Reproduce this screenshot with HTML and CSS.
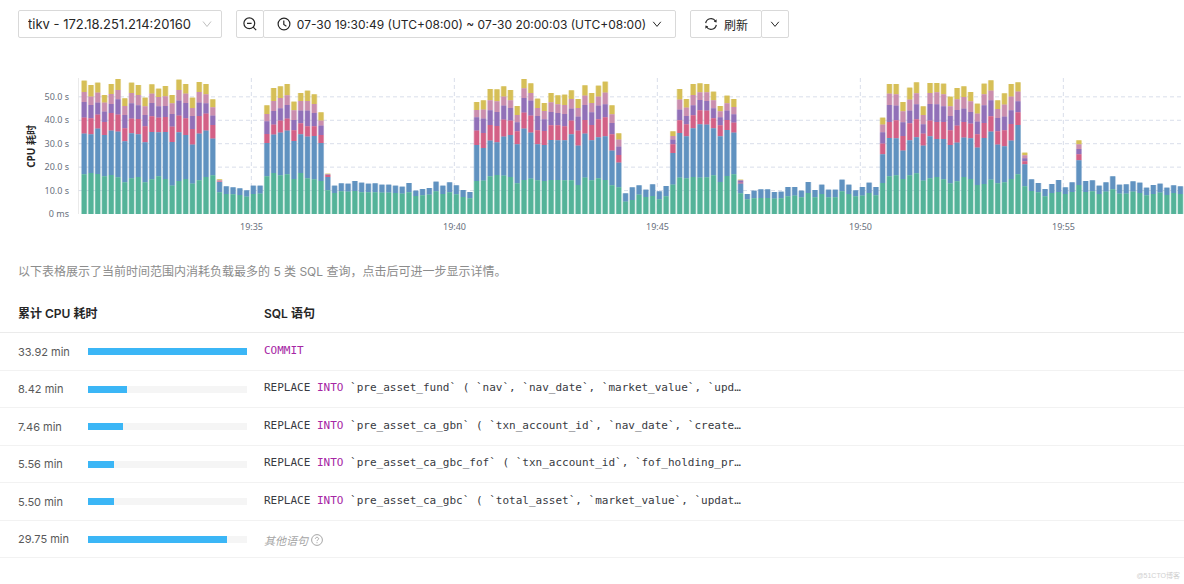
FILE: index.html
```html
<!DOCTYPE html>
<html lang="zh-CN">
<head>
<meta charset="utf-8">
<title>Top SQL</title>
<link rel="stylesheet" href="styles.css">
</head>
<body>
<header class="toolbar">
  <div class="instance">
    <select class="instance-select" aria-label="实例"><option>tikv - 172.18.251.214:20160</option></select>
    <svg class="icon-sm instance-arrow" viewBox="0 0 10 10" aria-hidden="true"><path d="M1 2.5l4 5 4-5"/></svg>
  </div>
  <div class="group">
    <button class="btn btn-icon" type="button" aria-label="缩小">
      <svg class="icon-zoom" viewBox="0 0 14 14" aria-hidden="true"><circle cx="6.3" cy="6.3" r="5.4"/><path d="M4 6.3h4.6M10.2 10.2l3 3"/></svg>
    </button>
    <button class="btn btn-range" type="button">
      <svg class="icon" viewBox="0 0 14 14" aria-hidden="true"><circle cx="7" cy="7" r="5.9"/><path d="M6.8 3.5v4l2.6 1.7"/></svg>
      <span>07-30 19:30:49 (UTC+08:00) ~ 07-30 20:00:03 (UTC+08:00)</span>
      <svg class="icon-sm" viewBox="0 0 10 10" aria-hidden="true"><path d="M1.2 2.8l3.8 4.6 3.8-4.6"/></svg>
    </button>
  </div>
  <div class="group">
    <button class="btn btn-refresh" type="button">
      <svg class="icon" viewBox="0 0 14 14" aria-hidden="true"><path d="M1.7 6.2A5.4 5.4 0 0 1 11.6 4.2M12.3 7.8A5.4 5.4 0 0 1 2.4 9.8"/><path class="solid" d="M12.6 2.3v3.1l-2.8-.7zM1.4 11.7V8.6l2.8.7z"/></svg>
      <span>刷新</span>
    </button>
    <button class="btn btn-more" type="button" aria-label="自动刷新">
      <svg class="icon-sm" viewBox="0 0 10 10" aria-hidden="true"><path d="M1.2 2.8l3.8 4.6 3.8-4.6"/></svg>
    </button>
  </div>
</header>

<section class="chart">
  <div class="y-title"><span>CPU 耗时</span></div>
  <div class="y-labels"><span>50.0 s</span><span>40.0 s</span><span>30.0 s</span><span>20.0 s</span><span>10.0 s</span><span>0 ms</span></div>
  <svg class="plot" id="plot" viewBox="0 0 3318 408" preserveAspectRatio="none" role="img" aria-label="CPU 耗时"></svg>
  <div class="x-labels"><span>19:35</span><span>19:40</span><span>19:45</span><span>19:50</span><span>19:55</span></div>
</section>

<p class="hint">以下表格展示了当前时间范围内消耗负载最多的 5 类 SQL 查询，点击后可进一步显示详情。</p>

<table class="top-sql">
  <colgroup><col class="col-time"><col class="col-meter"><col></colgroup>
  <thead><tr><th class="head-time" colspan="2" scope="col">累计 CPU 耗时</th><th scope="col">SQL 语句</th></tr></thead>
  <tbody>
    <tr><td class="time">33.92 min</td><td class="meter"><div class="track"><div class="fill" style="width:100%"></div></div></td><td class="sql"><code><b>COMMIT</b></code></td></tr>
    <tr><td class="time">8.42 min</td><td class="meter"><div class="track"><div class="fill" style="width:24.8%"></div></div></td><td class="sql"><code>REPLACE <b>INTO</b> `pre_asset_fund` ( `nav`, `nav_date`, `market_value`, `upd…</code></td></tr>
    <tr><td class="time">7.46 min</td><td class="meter"><div class="track"><div class="fill" style="width:22%"></div></div></td><td class="sql"><code>REPLACE <b>INTO</b> `pre_asset_ca_gbn` ( `txn_account_id`, `nav_date`, `create…</code></td></tr>
    <tr><td class="time">5.56 min</td><td class="meter"><div class="track"><div class="fill" style="width:16.4%"></div></div></td><td class="sql"><code>REPLACE <b>INTO</b> `pre_asset_ca_gbc_fof` ( `txn_account_id`, `fof_holding_pr…</code></td></tr>
    <tr><td class="time">5.50 min</td><td class="meter"><div class="track"><div class="fill" style="width:16.2%"></div></div></td><td class="sql"><code>REPLACE <b>INTO</b> `pre_asset_ca_gbc` ( `total_asset`, `market_value`, `updat…</code></td></tr>
    <tr><td class="time">29.75 min</td><td class="meter"><div class="track"><div class="fill" style="width:87.7%"></div></div></td><td class="sql"><span class="others"><em>其他语句</em><svg class="icon-help" viewBox="0 0 12 12" aria-hidden="true"><circle cx="6" cy="6" r="5.4"/><path d="M4.4 4.8c0-2 3.2-2 3.2 0C7.600 5.900 6 5.900 6 7.100M6 8.200v1"/></svg></span></td></tr>
  </tbody>
</table>
<footer class="watermark">@51CTO博客</footer>
<script src="chart.js"></script>
</body>
</html>
```
FILE: styles.css
```css
* { box-sizing: border-box; }
body {
  margin: 0;
  background: #fff;
  color: #262626;
  font-family: Inter, "Noto Sans CJK SC", sans-serif;
  font-size: 12px;
}
svg { fill: none; stroke: currentColor; flex: none; }
.toolbar { display: flex; gap: 14px; padding: 10px 18px 0; }
.instance { display: grid; align-items: center; width: 204px; }
.instance-select {
  grid-area: 1 / 1;
  width: 100%;
  height: 28px;
  padding: 0 9px;
  border: 1px solid #d9d9d9;
  border-radius: 2px;
  background: #fff;
  color: #262626;
  font: inherit;
  font-size: 13px;
  appearance: none;
}
.instance-arrow { grid-area: 1 / 1; justify-self: end; margin-right: 10px; color: #bfbfbf; pointer-events: none; }
.group { display: flex; }
.btn {
  display: flex;
  align-items: center;
  justify-content: center;
  height: 28px;
  padding: 0 12px;
  border: 1px solid #d9d9d9;
  border-radius: 2px;
  background: #fff;
  color: #262626;
  font: inherit;
  font-size: 12px;
  white-space: nowrap;
}
.btn + .btn { margin-left: -1px; }
.btn-icon { width: 28px; padding: 0; }
.btn-range { width: 413px; gap: 6px; }
.btn-refresh { width: 72px; gap: 6px; }
.btn-more { width: 28px; padding: 0; }
.icon, .icon-zoom { width: 14px; height: 14px; stroke-width: 1.2; }
.icon-sm { width: 10px; height: 10px; }
.solid { fill: currentColor; stroke: none; }

.chart {
  display: grid;
  grid-template-columns: 26px 43px 1fr;
  padding: 40px 0 0 9px;
}
.y-title { display: flex; align-items: center; justify-content: center; padding-left: 18px; }
.y-title span {
  writing-mode: vertical-rl;
  text-orientation: sideways;
  transform: rotate(180deg);
  font-family: "Open Sans", "Noto Sans CJK SC", sans-serif;
  font-size: 10px;
  font-weight: 700;
  line-height: 14px;
  white-space: nowrap;
}
.y-labels {
  display: flex;
  flex-direction: column;
  justify-content: space-between;
  padding: 13px 9px 0 0;
  margin-bottom: -6px;
  text-align: right;
}
.y-labels, .x-labels { color: #69707d; font-family: "Noto Sans", sans-serif; font-size: 9px; line-height: 12px; }
.plot { display: block; width: 100%; height: 136px; }
.x-labels { grid-column: 3; display: flex; padding: 7px 19px 0 72px; }
.x-labels span { flex: 1; text-align: center; }
.grid-line { stroke: #d9deea; stroke-width: 3; stroke-dasharray: 12 9; }
.axis-line { stroke: #e6e6e6; stroke-width: 3; }
.bar { stroke: none; }
.bar-edge { stroke: none; opacity: .5; }

.hint { margin: 29px 18px 0; color: #8c8c8c; font-size: 12px; line-height: 20px; }
.top-sql { width: 100%; margin-top: 12px; border-collapse: separate; border-spacing: 0; table-layout: fixed; }
.col-time { width: 88px; }
.col-meter { width: 176px; }
.top-sql th { height: 39px; padding: 0 0 2px; border-bottom: 1px solid #ebebeb; font-size: 12px; font-weight: 600; text-align: left; }
.top-sql th.head-time { padding-left: 18px; }
.top-sql td { height: 38px; padding: 0; border-bottom: 1px solid #f2f2f2; }
.top-sql tr:nth-child(even) td { height: 37px; }
.top-sql .time { padding-left: 18px; color: #595959; font-size: 11px; }
.track { width: 159px; height: 7px; background: #f5f5f5; }
.fill { height: 100%; background: #3bb6f6; }
code { display: block; padding-bottom: 2px; color: #383a42; font-family: "DejaVu Sans Mono", monospace; font-size: 11px; line-height: 16px; white-space: nowrap; }
code b { color: #a626a4; font-weight: 400; }
.others { display: flex; align-items: center; gap: 3px; padding-top: 2px; color: #a6a6a6; font-size: 11px; }
.icon-help { width: 12px; height: 12px; }
.watermark { padding: 10px 4px 0; color: #d0d0d0; font-family: "Liberation Sans", "Noto Sans CJK SC", sans-serif; font-size: 7px; line-height: 16px; text-align: right; }
```
FILE: chart.js
```js
// Upper edge of each stacked segment, one bar per ten seconds.
// Six values: yellow, pink, purple, red, blue, green. Two values: blue, green.
const bars = `47,81,111,158,206,328 60,95,120,160,208,324 53,83,113,149,191,327 90,113,140,171,210,334
57,87,117,144,197,330 42,75,103,149,200,337 100,123,150,190,229,352 53,84,115,161,205,340
60,90,121,162,208,336 98,124,150,184,232,352 58,86,114,154,201,343 71,96,124,158,202,334
63,94,123,156,201,342 90,115,147,185,231,362 44,75,107,152,202,348 57,86,114,160,210,342
98,129,153,192,239,356 51,81,113,153,206,346 57,88,115,146,197,336 103,127,152,180,221,331
343,346,350,350,351,382 364,387 367,388 370,390 376,395 362,387 362,386
121,147,169,207,234,334 69,108,138,179,209,324 64,99,130,167,203,331 57,91,120,161,197,328
110,136,165,196,228,342 84,108,137,175,208,324 77,108,137,184,215,340 88,117,144,184,213,343
142,167,182,210,234,348 326,328,329,330,336,376 362,384 355,379 356,380 348,378 353,382
356,382 355,382 359,383 359,383 362,384 365,386 354,382 377,393 372,391 369,389 350,379
362,387 352,382 361,388 375,396 381,400
111,135,157,197,240,348 106,134,161,204,249,347 72,106,136,180,227,334 73,109,141,183,232,330
64,95,122,164,215,332 75,106,129,167,210,336 123,150,172,199,238,355 42,70,99,143,191,345
55,84,107,152,203,341 101,129,153,196,238,346 114,138,163,198,240,348 84,112,141,181,225,345
91,118,144,181,226,345 89,120,147,184,226,346 76,102,131,167,208,346 102,129,155,197,242,360
61,92,120,165,206,338 84,114,142,180,226,346 62,95,122,163,217,340 50,83,118,157,214,345
121,148,174,208,257,361 205,224,245,270,293,367 385,410 367,405 361,389 374,396 358,393
379,403 363,394 199,213,224,238,264,359 72,104,134,166,204,338 102,128,153,178,214,340
57,90,121,151,190,336 55,82,105,136,178,338 57,82,108,137,179,337 80,106,130,160,190,331
123,139,157,181,214,351 92,115,137,165,195,333 102,126,148,173,203,328 344,346,347,353,356,385
387,403 377,400 373,399 373,399 381,401 380,400 366,394 366,392 377,397 351,384 375,397
359,387 374,397 374,397 344,379 359,387 376,394 366,392 353,384 366,391
158,179,202,236,268,354 57,86,120,171,219,334 57,88,122,166,220,331 111,139,172,213,257,342
68,104,137,175,226,331 52,85,118,163,217,325 124,150,178,206,242,347 54,84,117,167,214,340
54,82,118,171,222,336 56,88,124,171,222,343 95,124,153,196,240,355 69,103,135,182,233,349
64,96,131,171,218,336 81,109,141,176,220,342 116,146,170,208,248,360 56,88,121,174,219,357
46,77,106,154,200,344 106,132,159,199,239,355 85,119,155,196,244,352 57,95,136,177,227,342
52,80,109,142,180,328 263,271,280,289,298,364 343,378 354,382 372,394 357,384 345,381 367,387
352,381 226,238,252,268,286,360 348,381 346,379 362,387 352,380 334,373 359,386 358,386
349,380 353,384 368,391 360,387 356,383 368,390 361,384 364,387`
  .split(/\s+/).map(bar => bar.split(',').map(Number));

const colors = ['#d6bf57', '#ca8eae', '#9170b8', '#d36086', '#6092c0', '#54b399'];
const base = 447, top0 = 39, pitch = 20.3, first = 18.6;
const plot = document.getElementById('plot');

function add(name, attrs) {
  const el = document.createElementNS('http://www.w3.org/2000/svg', name);
  for (const key in attrs) el.setAttribute(key, attrs[key]);
  plot.appendChild(el);
}

for (let i = 1; i <= 5; i++) {
  const y = base - top0 - i * 70.3;
  add('line', { class: 'grid-line', x1: 0, x2: 3318, y1: y, y2: y });
}
for (let i = 0; i < 5; i++) {
  const x = 520 + i * 609;
  add('line', { class: 'grid-line', x1: x, x2: x, y1: 0, y2: 408 });
}
add('line', { class: 'axis-line', x1: 1, x2: 1, y1: 0, y2: 408 });
bars.forEach((edges, i) => {
  const palette = colors.slice(-edges.length);
  const center = first + pitch * i;
  edges.forEach((edge, k) => {
    const end = k + 1 < edges.length ? edges[k + 1] : base;
    if (end <= edge) return;
    const shape = { fill: palette[k], y: edge - top0, height: end - edge };
    add('rect', { ...shape, class: 'bar-edge', x: center - 9, width: 18 });
    add('rect', { ...shape, class: 'bar', x: center - 7, width: 14 });
  });
});
```
